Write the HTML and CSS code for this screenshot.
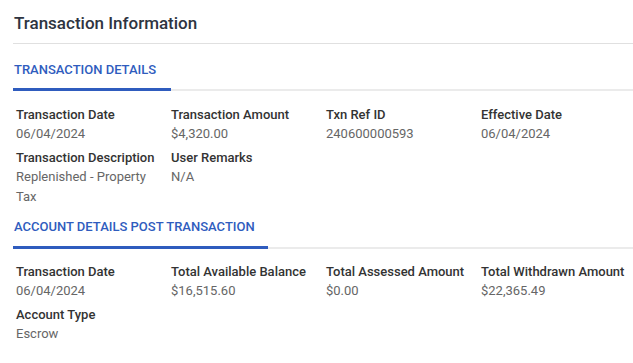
FILE: index.html
```html
<!DOCTYPE html>
<html>
<head>
<meta charset="utf-8">
<link rel="stylesheet" href="styles.css">
</head>
<body>
<div class="panel">
  <h1 class="title">Transaction Information</h1>
  <section class="section">
    <div class="tabbar"><span class="tab">TRANSACTION DETAILS</span></div>
    <div class="grid">
      <div class="field"><div class="label">Transaction Date</div><div class="value">06/04/2024</div></div>
      <div class="field"><div class="label">Transaction Amount</div><div class="value">$4,320.00</div></div>
      <div class="field"><div class="label">Txn Ref ID</div><div class="value">240600000593</div></div>
      <div class="field"><div class="label">Effective Date</div><div class="value">06/04/2024</div></div>
      <div class="field"><div class="label">Transaction Description</div><div class="value">Replenished - Property Tax</div></div>
      <div class="field"><div class="label">User Remarks</div><div class="value">N/A</div></div>
    </div>
  </section>
  <section class="section section-second">
    <div class="tabbar"><span class="tab">ACCOUNT DETAILS POST TRANSACTION</span></div>
    <div class="grid">
      <div class="field"><div class="label">Transaction Date</div><div class="value">06/04/2024</div></div>
      <div class="field"><div class="label">Total Available Balance</div><div class="value">$16,515.60</div></div>
      <div class="field"><div class="label">Total Assessed Amount</div><div class="value">$0.00</div></div>
      <div class="field"><div class="label">Total Withdrawn Amount</div><div class="value">$22,365.49</div></div>
      <div class="field"><div class="label">Account Type</div><div class="value">Escrow</div></div>
    </div>
  </section>
</div>
</body>
</html>
```

FILE: styles.css
```css
html, body {
  margin: 0;
  padding: 0;
  background: #ffffff;
}
body {
  font-family: Roboto, "Liberation Sans", sans-serif;
}
.panel {
  padding: 11px 0 0 13px;
}
.title {
  margin: 0;
  padding: 0 0 8px 1px;
  font-size: 17px;
  line-height: 24px;
  font-weight: 500;
  color: #2e3441;
  border-bottom: 1px solid #e0e0e0;
}
.section {
  display: flex;
  flex-direction: column;
}
.tabbar {
  display: flex;
  margin-top: 17px;
  border-bottom: 2px solid #ebebeb;
}
.section-second .tabbar {
  margin-top: 11px;
}
.section-second .tab {
  padding-bottom: 10px;
  padding-right: 13px;
}
.tab {
  padding: 0 15px 9px 1px;
  margin-bottom: -2px;
  font-size: 13px;
  line-height: 18px;
  font-weight: 500;
  color: #2f5cbe;
  border-bottom: 3px solid #2f5cbe;
}
.grid {
  display: grid;
  grid-template-columns: repeat(4, 1fr);
  margin-right: -3px;
  padding: 14px 0 0 3px;
  row-gap: 4px;
}
.section-second .grid {
  padding-top: 13px;
}
.field {
  font-size: 13px;
}
.label {
  line-height: 19px;
  font-weight: 500;
  color: #333333;
}
.value {
  line-height: 20px;
  color: #666666;
  padding-right: 12px;
}
```
